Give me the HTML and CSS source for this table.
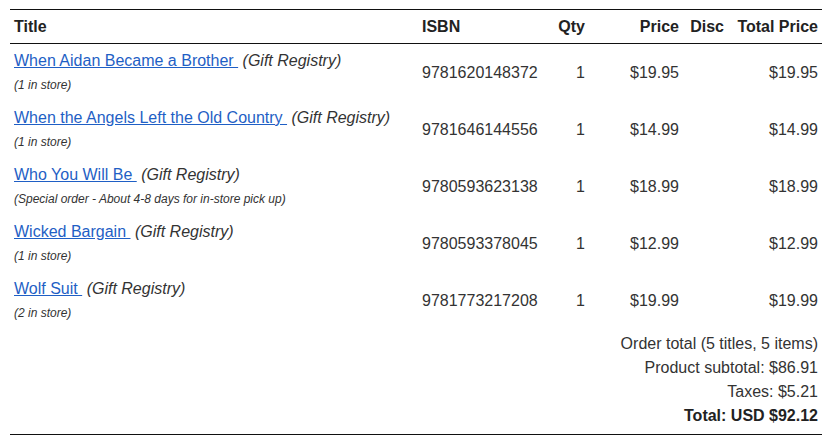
FILE: index.html
```html
<!DOCTYPE html>
<html>
<head>
<meta charset="utf-8">
<link rel="stylesheet" href="styles.css">
</head>
<body>
<div class="page">
<table class="cart">
  <colgroup>
    <col class="c-title"><col class="c-isbn"><col class="c-qty"><col class="c-price"><col class="c-disc"><col class="c-total">
  </colgroup>
  <thead>
    <tr>
      <th class="left">Title</th>
      <th class="left">ISBN</th>
      <th class="right">Qty</th>
      <th class="right">Price</th>
      <th class="right">Disc</th>
      <th class="right">Total Price</th>
    </tr>
  </thead>
  <tbody>
    <tr>
      <td class="title"><div class="name"><a href="#">When Aidan Became a Brother&nbsp;</a> <em>(Gift Registry)</em></div><div class="note">(1 in store)</div></td>
      <td>9781620148372</td><td class="right">1</td><td class="right">$19.95</td><td class="right"></td><td class="right">$19.95</td>
    </tr>
    <tr>
      <td class="title"><div class="name"><a href="#">When the Angels Left the Old Country&nbsp;</a> <em>(Gift Registry)</em></div><div class="note">(1 in store)</div></td>
      <td>9781646144556</td><td class="right">1</td><td class="right">$14.99</td><td class="right"></td><td class="right">$14.99</td>
    </tr>
    <tr>
      <td class="title"><div class="name"><a href="#">Who You Will Be&nbsp;</a> <em>(Gift Registry)</em></div><div class="note">(Special order - About 4-8 days for in-store pick up)</div></td>
      <td>9780593623138</td><td class="right">1</td><td class="right">$18.99</td><td class="right"></td><td class="right">$18.99</td>
    </tr>
    <tr>
      <td class="title"><div class="name"><a href="#">Wicked Bargain&nbsp;</a> <em>(Gift Registry)</em></div><div class="note">(1 in store)</div></td>
      <td>9780593378045</td><td class="right">1</td><td class="right">$12.99</td><td class="right"></td><td class="right">$12.99</td>
    </tr>
    <tr>
      <td class="title"><div class="name"><a href="#">Wolf Suit&nbsp;</a> <em>(Gift Registry)</em></div><div class="note">(2 in store)</div></td>
      <td>9781773217208</td><td class="right">1</td><td class="right">$19.99</td><td class="right"></td><td class="right">$19.99</td>
    </tr>
  </tbody>
  <tfoot>
    <tr>
      <td colspan="6" class="summary">
        <div>Order total (5 titles, 5 items)</div>
        <div>Product subtotal: $86.91</div>
        <div>Taxes: $5.21</div>
        <div class="grand">Total: USD $92.12</div>
      </td>
    </tr>
  </tfoot>
</table>
</div>
</body>
</html>
```

FILE: styles.css
```css
html, body {
  margin: 0;
  padding: 0;
  background: #fff;
}
body {
  font-family: "Liberation Sans", Arial, sans-serif;
  font-size: 16px;
  color: #333;
}
.page {
  padding: 9px 11px 0 10px;
}
.cart {
  width: 812px;
  border-collapse: collapse;
  table-layout: fixed;
}
.c-title { width: 408px; }
.c-isbn { width: 127px; }
.c-qty { width: 44px; }
.c-price { width: 94px; }
.c-disc { width: 45px; }
.c-total { width: 94px; }
.cart th {
  font-weight: bold;
  color: #222;
  line-height: 17px;
  padding: 8px 4px;
  border-top: 1px solid #111;
  border-bottom: 1px solid #111;
  white-space: nowrap;
}
.left { text-align: left; }
.right { text-align: right; }
.cart td {
  padding: 0 4px;
  vertical-align: middle;
  line-height: 18px;
  white-space: nowrap;
}
.cart td.title {
  padding: 7px 4px 9px;
}
.name {
  line-height: 20px;
}
.name a {
  color: #1f5fc5;
  text-decoration: underline;
}
.name em {
  font-style: italic;
  color: #333;
}
.note {
  font-size: 12px;
  font-style: italic;
  line-height: 14px;
  margin-top: 7px;
  color: #333;
}
.cart td.summary {
  text-align: right;
  padding: 3px 4px 6px;
  border-bottom: 1px solid #111;
}
.summary div {
  line-height: 24px;
}
.summary .grand {
  font-weight: bold;
  color: #222;
}
```
